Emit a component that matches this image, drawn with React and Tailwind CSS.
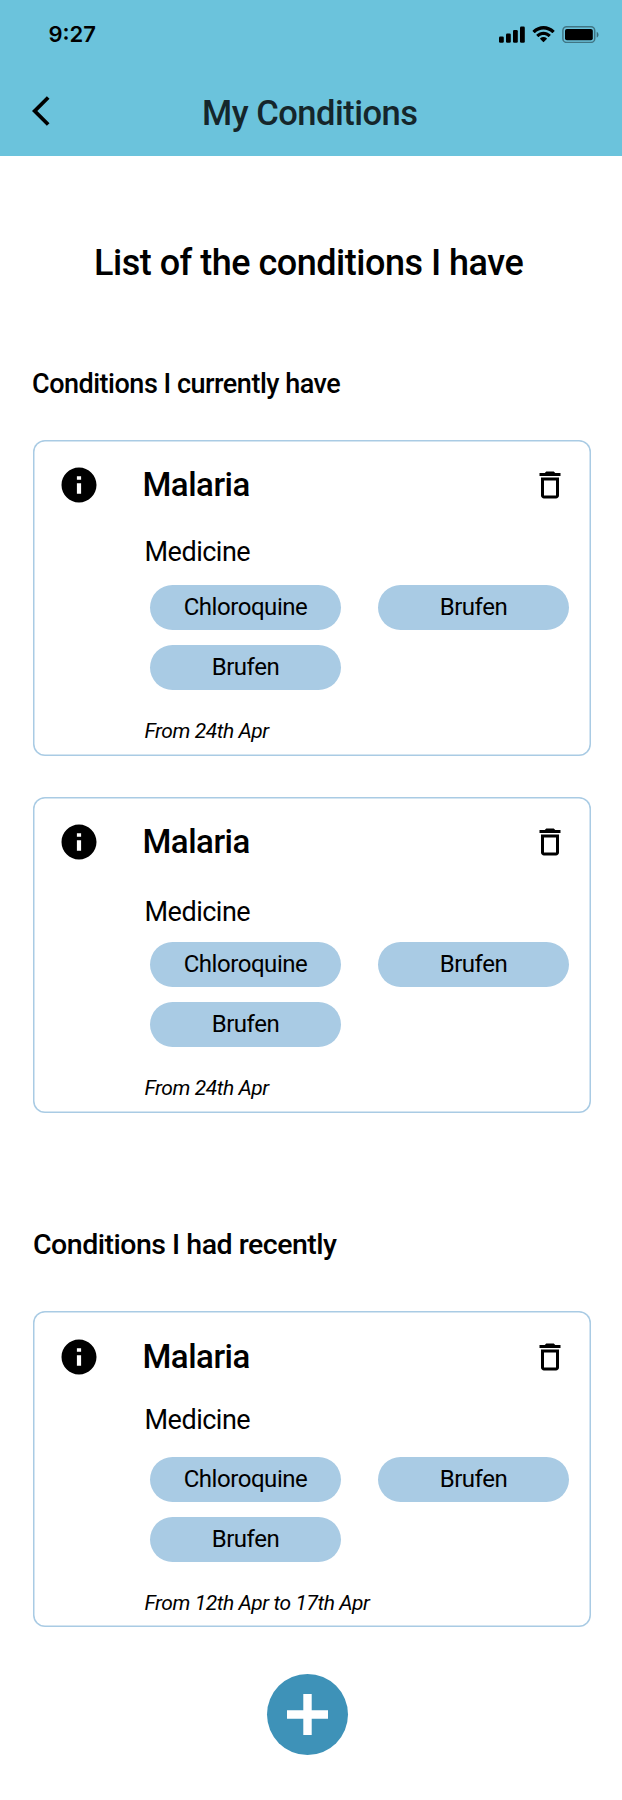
import React from "react";

function SignalIcon() {
  return (
    <svg width="26" height="17" viewBox="0 0 26 17" aria-hidden="true">
      <rect x="0" y="10.5" width="4.8" height="6.3" rx="1.3" />
      <rect x="7" y="7.5" width="4.8" height="9.3" rx="1.3" />
      <rect x="14" y="4" width="4.8" height="12.8" rx="1.3" />
      <rect x="21" y="0.6" width="4.8" height="16.2" rx="1.3" />
    </svg>
  );
}

function WifiIcon() {
  return (
    <svg width="23" height="17" viewBox="0 0 16 11.4" preserveAspectRatio="none" aria-hidden="true">
      <path d="M8 2.3c2.2 0 4.4.9 6 2.4.1.1.3.1.4 0l1.2-1.2c.1-.1.1-.3 0-.4-4.2-4.1-10.9-4.1-15.1 0-.1.1-.1.3 0 .4l1.2 1.2c.1.1.3.1.4 0C3.6 3.1 5.8 2.3 8 2.3Z" />
      <path d="M8 6.1c1.2 0 2.4.45 3.3 1.27.12.12.31.12.43 0l1.16-1.18c.12-.12.12-.32 0-.45-2.76-2.6-7.01-2.6-9.77 0-.13.12-.13.32 0 .45l1.16 1.18c.12.12.31.12.43 0C5.6 6.55 6.8 6.1 8 6.1Z" />
      <path d="M10.3 8.7c.12-.12.12-.33-.01-.44-1.32-1.12-3.26-1.12-4.58 0-.13.11-.13.32-.01.44l2.06 2.1c.13.13.33.13.46 0Z" />
    </svg>
  );
}

function BatteryIcon() {
  return (
    <svg width="38" height="17" viewBox="0 0 38 17" aria-hidden="true">
      <rect x="0.9" y="0.8" width="31.8" height="15.6" rx="3.7" fill="none" stroke="#000" strokeWidth="1.5" opacity="0.4" />
      <path d="M34.7 5.8v5.8c1.1-.5 1.8-1.6 1.8-2.9s-.7-2.4-1.8-2.9Z" opacity="0.45" />
      <rect x="3" y="2.9" width="27.8" height="11.3" rx="1.9" />
    </svg>
  );
}

function InfoIcon() {
  return (
    <svg className="block h-[42px] w-[42px]" viewBox="0 0 24 24" aria-hidden="true">
      <path d="M12 2C6.48 2 2 6.48 2 12s4.48 10 10 10 10-4.48 10-10S17.52 2 12 2zm1.2 15h-2.4v-6h2.4v6zm0-8h-2.4V7h2.4v2z" />
    </svg>
  );
}

function TrashIcon() {
  return (
    <svg className="block h-[36px] w-[36px]" viewBox="0 0 24 24" aria-hidden="true">
      <path d="M6 19c0 1.1.9 2 2 2h8c1.1 0 2-.9 2-2V7H6v12zM8 9h8v10H8V9zm7.5-5l-1-1h-5l-1 1H5v2h14V4h-3.5z" />
    </svg>
  );
}

function Chip({ children }) {
  return (
    <span className="flex h-[45px] w-[191px] items-center justify-center rounded-full bg-[#a9cbe4] pb-[1px] text-[24px] leading-[44px] tracking-[-0.45px]">
      {children}
    </span>
  );
}

function ConditionCard({ name, medicines, period, labelClass }) {
  return (
    <article className="h-[316px] w-[558px] rounded-[12px] pl-[25px] pr-[23px] pt-[25.3px] shadow-[inset_0_0_0_1.5px_#a9cbe4]">
      <header className="flex h-[40px] items-center">
        <InfoIcon />
        <h3 className="ml-[42.5px] flex-1 text-[33px] font-medium leading-[40px] tracking-[-0.49px]">{name}</h3>
        <button aria-label="Delete" className="block">
          <TrashIcon />
        </button>
      </header>
      <div className="ml-[86.5px] h-[80px]">
        <p className={labelClass}>Medicine</p>
      </div>
      <div className="ml-[92px] grid w-[418px] grid-cols-[191px_191px] gap-x-[37px] gap-y-[15px]">
        {medicines.map((m, i) => (
          <Chip key={i}>{m}</Chip>
        ))}
      </div>
      <p className="ml-[86.5px] mt-[27.4px] text-[21px] italic leading-[28px] tracking-[-0.43px]">{period}</p>
    </article>
  );
}

const medicines = ["Chloroquine", "Brufen", "Brufen"];

export default function App() {
  return (
    <div className="flex h-[1800px] w-[622px] flex-col overflow-hidden bg-white font-[Roboto,sans-serif] text-black">
      <div className="h-[156px] bg-[#6bc3dc]">
        <div className="flex h-[68px] items-center pl-[48.5px] pr-[22px]">
          <span className="flex-1 font-[Inter,sans-serif] text-[22px] font-semibold leading-[28px]">9:27</span>
          <div className="flex items-center gap-[7px]">
            <SignalIcon />
            <WifiIcon />
            <BatteryIcon />
          </div>
        </div>
        <div className="flex h-[86px] items-center">
          <button aria-label="Back" className="ml-[32px] w-[36px]">
            <svg className="block h-[36px] w-[36px]" viewBox="0 0 24 24" aria-hidden="true">
              <path d="M11.67 3.87L9.9 2.1 0 12l9.9 9.9 1.77-1.77L3.54 12z" />
            </svg>
          </button>
          <h1 className="ml-[134px] pt-[4px] text-[34.5px] font-medium leading-[44px] tracking-[-0.5px] text-[#15262b]">My Conditions</h1>
        </div>
      </div>

      <h2 className="mt-[85px] pl-[94px] text-[36px] font-medium leading-[44px] tracking-[-0.49px]">List of the conditions I have</h2>

      <h2 className="mt-[83px] pl-[32px] text-[27px] font-medium leading-[32px] tracking-[-0.49px]">Conditions I currently have</h2>
      <div className="mt-[39.6px] flex flex-col gap-[41px] pl-[33px]">
        <ConditionCard name="Malaria" medicines={medicines} period="From 24th Apr" labelClass="pt-[31px] text-[27px] leading-[32px] tracking-[-0.49px]" />
        <ConditionCard name="Malaria" medicines={medicines} period="From 24th Apr" labelClass="pt-[34px] text-[27px] leading-[32px] tracking-[-0.49px]" />
      </div>

      <h2 className="mt-[116.4px] pl-[33px] text-[28.5px] font-medium leading-[32px] tracking-[-0.49px]">Conditions I had recently</h2>
      <div className="mt-[50.45px] pl-[33px]">
        <ConditionCard name="Malaria" medicines={medicines} period="From 12th Apr to 17th Apr" labelClass="pt-[27.5px] text-[27px] leading-[32px] tracking-[-0.49px]" />
      </div>

      <button aria-label="Add condition" className="ml-[267px] mt-[46.55px] flex h-[81px] w-[81px] items-center justify-center rounded-full bg-[#3e92b8]">
        <svg width="41" height="41" viewBox="0 0 41 41" aria-hidden="true">
          <path d="M16.3 0h8.4v16.3H41v8.4H24.7V41h-8.4V24.7H0v-8.4h16.3Z" fill="#fff" />
        </svg>
      </button>
    </div>
  );
}
